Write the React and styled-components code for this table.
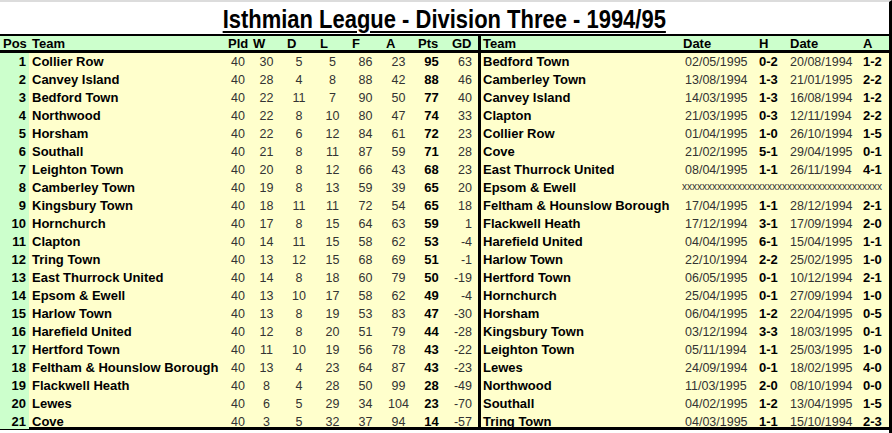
import React from 'react';
import styled, { createGlobalStyle } from 'styled-components';

const GlobalStyle = createGlobalStyle`
  body {
    margin: 0;
    background: #ffffff;
    font-family: "Liberation Sans", Arial, sans-serif;
  }
`;

const COLS = '29px 196px 26px 31px 34px 33px 33px 33px 33px 30px 203px 76px 30px 73px 29px';

const Page = styled.div`
  width: 892px;
  height: 433px;
  box-sizing: border-box;
  border-top: 2px solid #dcdcdc;
  border-right: 3px solid #000;
  overflow: hidden;
`;

const Title = styled.div`
  height: 32px;
  box-sizing: border-box;
  padding-top: 2px;
  text-align: center;
  line-height: 30px;
`;

const TitleText = styled.span`
  display: inline-block;
  font-weight: bold;
  font-size: 26px;
  color: #000;
  text-decoration: underline;
  text-decoration-thickness: 2px;
  text-underline-offset: 3px;
  transform: scaleX(0.845);
`;

const Table = styled.div`
  border-top: 2px solid #000;
  border-bottom: 3px solid #000;
`;

const Row = styled.div`
  display: grid;
  grid-template-columns: ${COLS};
  box-sizing: border-box;
  height: ${(p) => (p.$head ? '17px' : '18px')};
  background: ${(p) => (p.$head ? '#ccffcc' : '#ffffcc')};
  border-bottom: ${(p) => (p.$head ? '3px solid #000' : 'none')};
  line-height: 14px;
  padding-top: ${(p) => (p.$head ? '1px' : '0')};
  &:last-child {
    height: 14px;
  }
`;

const Cell = styled.div`
  font-size: ${(p) => (p.$bold ? '13px' : '12.5px')};
  font-weight: ${(p) => (p.$bold ? 'bold' : 'normal')};
  color: ${(p) => (p.$bold ? '#000' : '#333')};
  text-align: ${(p) => p.$align || 'left'};
  padding: 2px ${(p) => p.$pr || 0}px 0 ${(p) => p.$pl || 0}px;
  white-space: nowrap;
  background: ${(p) => (p.$green ? '#ccffcc' : 'transparent')};
  border-left: ${(p) => (p.$divider ? '3px solid #000' : 'none')};
`;

const HeadCell = styled.div`
  font-size: 13px;
  font-weight: bold;
  color: #000;
  padding-left: ${(p) => p.$pl}px;
  white-space: nowrap;
  ${(p) => (p.$divider ? 'border-left: 3px solid #000; margin-top: -1px; padding-top: 1px;' : '')}
`;

const Void = styled.div`
  grid-column: span 4;
  font-size: 10px;
  line-height: 12px;
  padding-top: 2px;
  color: #333;
  padding-left: 1px;
  white-space: nowrap;
`;

const league = [
  [1, 'Collier Row', 40, 30, 5, 5, 86, 23, 95, 63],
  [2, 'Canvey Island', 40, 28, 4, 8, 88, 42, 88, 46],
  [3, 'Bedford Town', 40, 22, 11, 7, 90, 50, 77, 40],
  [4, 'Northwood', 40, 22, 8, 10, 80, 47, 74, 33],
  [5, 'Horsham', 40, 22, 6, 12, 84, 61, 72, 23],
  [6, 'Southall', 40, 21, 8, 11, 87, 59, 71, 28],
  [7, 'Leighton Town', 40, 20, 8, 12, 66, 43, 68, 23],
  [8, 'Camberley Town', 40, 19, 8, 13, 59, 39, 65, 20],
  [9, 'Kingsbury Town', 40, 18, 11, 11, 72, 54, 65, 18],
  [10, 'Hornchurch', 40, 17, 8, 15, 64, 63, 59, 1],
  [11, 'Clapton', 40, 14, 11, 15, 58, 62, 53, -4],
  [12, 'Tring Town', 40, 13, 12, 15, 68, 69, 51, -1],
  [13, 'East Thurrock United', 40, 14, 8, 18, 60, 79, 50, -19],
  [14, 'Epsom & Ewell', 40, 13, 10, 17, 58, 62, 49, -4],
  [15, 'Harlow Town', 40, 13, 8, 19, 53, 83, 47, -30],
  [16, 'Harefield United', 40, 12, 8, 20, 51, 79, 44, -28],
  [17, 'Hertford Town', 40, 11, 10, 19, 56, 78, 43, -22],
  [18, 'Feltham & Hounslow Borough', 40, 13, 4, 23, 64, 87, 43, -23],
  [19, 'Flackwell Heath', 40, 8, 4, 28, 50, 99, 28, -49],
  [20, 'Lewes', 40, 6, 5, 29, 34, 104, 23, -70],
  [21, 'Cove', 40, 3, 5, 32, 37, 94, 14, -57],
];

const results = [
  ['Bedford Town', '02/05/1995', '0-2', '20/08/1994', '1-2'],
  ['Camberley Town', '13/08/1994', '1-3', '21/01/1995', '2-2'],
  ['Canvey Island', '14/03/1995', '1-3', '16/08/1994', '1-2'],
  ['Clapton', '21/03/1995', '0-3', '12/11/1994', '2-2'],
  ['Collier Row', '01/04/1995', '1-0', '26/10/1994', '1-5'],
  ['Cove', '21/02/1995', '5-1', '29/04/1995', '0-1'],
  ['East Thurrock United', '08/04/1995', '1-1', '26/11/1994', '4-1'],
  ['Epsom & Ewell'],
  ['Feltham & Hounslow Borough', '17/04/1995', '1-1', '28/12/1994', '2-1'],
  ['Flackwell Heath', '17/12/1994', '3-1', '17/09/1994', '2-0'],
  ['Harefield United', '04/04/1995', '6-1', '15/04/1995', '1-1'],
  ['Harlow Town', '22/10/1994', '2-2', '25/02/1995', '1-0'],
  ['Hertford Town', '06/05/1995', '0-1', '10/12/1994', '2-1'],
  ['Hornchurch', '25/04/1995', '0-1', '27/09/1994', '1-0'],
  ['Horsham', '06/04/1995', '1-2', '22/04/1995', '0-5'],
  ['Kingsbury Town', '03/12/1994', '3-3', '18/03/1995', '0-1'],
  ['Leighton Town', '05/11/1994', '1-1', '25/03/1995', '1-0'],
  ['Lewes', '24/09/1994', '0-1', '18/02/1995', '4-0'],
  ['Northwood', '11/03/1995', '2-0', '08/10/1994', '0-0'],
  ['Southall', '04/02/1995', '1-2', '13/04/1995', '1-5'],
  ['Tring Town', '04/03/1995', '1-1', '15/10/1994', '2-3'],
];

const headers = [
  ['Pos', 3], ['Team', 3], ['Pld', 3], ['W', 2], ['D', 5], ['L', 4], ['F', 3],
  ['A', 4], ['Pts', 3], ['GD', 4], ['Team', 2], ['Date', 2], ['H', 2], ['Date', 3], ['A', 3],
];

export default function App() {
  return (
    <>
      <GlobalStyle />
      <Page>
        <Title>
          <TitleText>Isthmian League - Division Three - 1994/95</TitleText>
        </Title>
        <Table>
          <Row $head>
            {headers.map(([label, pl], i) => (
              <HeadCell key={i} $pl={pl} $divider={i === 10}>
                {label}
              </HeadCell>
            ))}
          </Row>
          {league.map((t, i) => {
            const r = results[i];
            return (
              <Row key={t[0]}>
                <Cell $bold $green $align="right" $pr={3}>{t[0]}</Cell>
                <Cell $bold $pl={3}>{t[1]}</Cell>
                <Cell $align="center">{t[2]}</Cell>
                <Cell $align="center">{t[3]}</Cell>
                <Cell $align="center">{t[4]}</Cell>
                <Cell $align="center">{t[5]}</Cell>
                <Cell $align="center">{t[6]}</Cell>
                <Cell $align="center">{t[7]}</Cell>
                <Cell $bold $align="center">{t[8]}</Cell>
                <Cell $align="right" $pr={6}>{t[9]}</Cell>
                <Cell $bold $divider $pl={2}>{r[0]}</Cell>
                {r.length > 1 ? (
                  <>
                    <Cell $pl={4}>{r[1]}</Cell>
                    <Cell $bold $pl={2}>{r[2]}</Cell>
                    <Cell $pl={3}>{r[3]}</Cell>
                    <Cell $bold $pl={3}>{r[4]}</Cell>
                  </>
                ) : (
                  <Void>{'x'.repeat(40)}</Void>
                )}
              </Row>
            );
          })}
        </Table>
      </Page>
    </>
  );
}
